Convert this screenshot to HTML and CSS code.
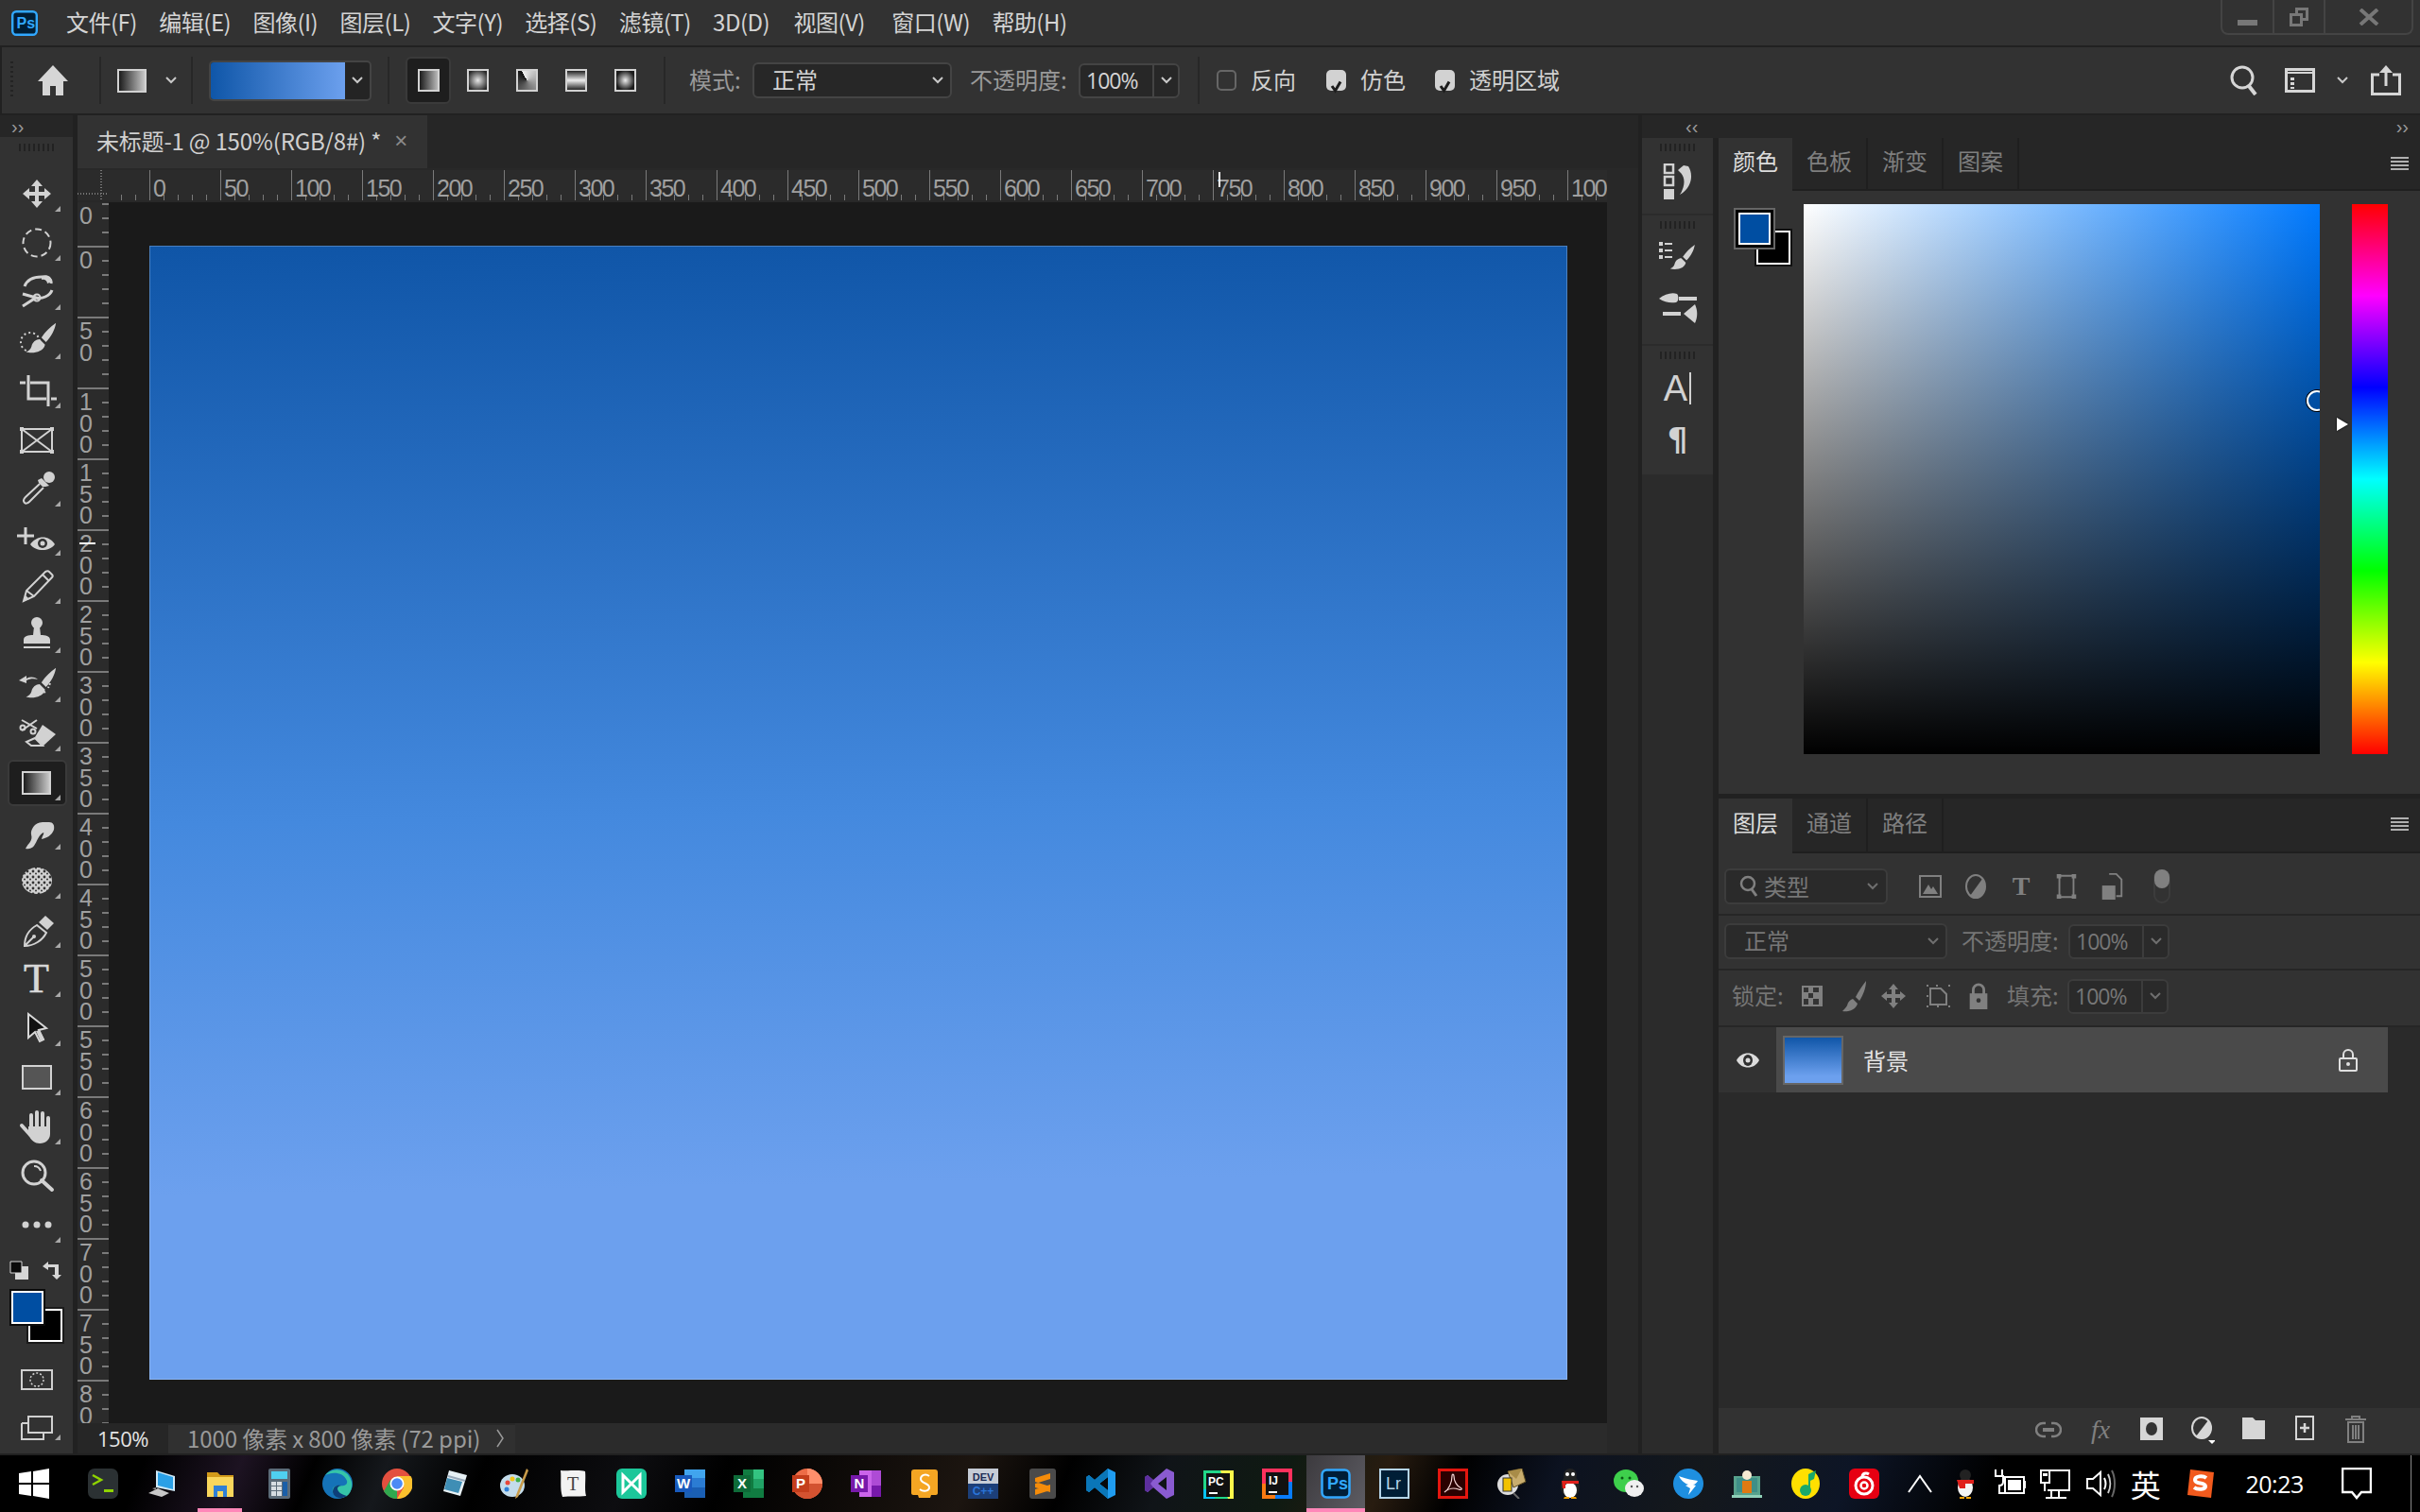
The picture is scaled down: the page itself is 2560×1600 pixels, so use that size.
FILE: index.html
```html
<!DOCTYPE html>
<html lang="zh">
<head>
<meta charset="utf-8">
<title>Photoshop</title>
<link rel="stylesheet" href="styles.css">
</head>
<body>
<svg class="defs" width="0" height="0">
  <symbol id="chev" viewBox="0 0 12 8"><path d="M1 1l5 5 5-5" fill="none" stroke="currentColor" stroke-width="2"/></symbol>
  <symbol id="brush" viewBox="0 0 48 48"><path d="M44 5C38 9 32 15 28 21l5 5C39 20 43 12 44 5zM26 23c-4 0-8 3-9 8-1 3-3 5-6 6 6 2 19 1 21-8z" fill="currentColor"/></symbol>
</svg>
<div class="app">
  <header class="menubar">
    <svg class="pslogo" viewBox="0 0 28 27"><rect x="1.2" y="1.2" width="25.6" height="24.6" rx="4" fill="#001e36" stroke="#31a8ff" stroke-width="2.4"/><text x="5.5" y="19" class="logo-t ps-t">Ps</text></svg>
    <nav class="menus">
      <span>文件(F)</span><span>编辑(E)</span><span>图像(I)</span><span>图层(L)</span><span>文字(Y)</span><span>选择(S)</span><span>滤镜(T)</span><span>3D(D)</span><span>视图(V)</span><span>窗口(W)</span><span>帮助(H)</span>
    </nav>
    <div class="winctl">
      <div class="wc wc-min"><i></i></div>
      <div class="wc wc-res"><svg viewBox="0 0 24 24" width="24" height="24"><path d="M8 2h14v14h-6v6H2V8h6zM11 5v3h5v5h3V5zM5 11v8h8v-8z" fill="#777"/></svg></div>
      <div class="wc wc-x"><svg viewBox="0 0 22 18" width="22" height="18"><path d="M2 1l18 16M20 1L2 17" stroke="#777" stroke-width="4"/></svg></div>
    </div>
  </header>

  <section class="options">
    <div class="grip-v"></div>
    <svg class="home" viewBox="0 0 32 32"><path d="M16 0L0 17h5v15h8V22h6v10h8V17h5z" fill="#d6d6d6"/></svg>
    <div class="osep"></div>
    <div class="opt-tool"><div class="grad-ic"></div><svg class="chev"><use href="#chev"/></svg></div>
    <div class="osep"></div>
    <div class="picker"><div class="picker-grad"></div><div class="picker-btn"><svg class="chev"><use href="#chev"/></svg></div></div>
    <div class="osep"></div>
    <div class="gtypes">
      <div class="gt on"><div class="gi gi-lin"></div></div>
      <div class="gt"><div class="gi gi-rad"></div></div>
      <div class="gt"><div class="gi gi-ang"></div></div>
      <div class="gt"><div class="gi gi-ref"></div></div>
      <div class="gt"><div class="gi gi-dia"></div></div>
    </div>
    <div class="osep"></div>
    <span class="lbl lbl-mode">模式:</span>
    <div class="sel sel-mode"><span>正常</span><svg class="chev"><use href="#chev"/></svg></div>
    <span class="lbl lbl-op">不透明度:</span>
    <div class="numbox"><span>100%</span><div class="numbtn"><svg class="chev"><use href="#chev"/></svg></div></div>
    <div class="osep osep-b"></div>
    <div class="cb"></div><span class="cbl">反向</span>
    <div class="cb ck"><svg viewBox="0 0 21 22" width="21" height="22"><path d="M6 11l3.500 5 5.500-9.500" fill="none" stroke="#1c1c1c" stroke-width="3"/></svg></div><span class="cbl">仿色</span>
    <div class="cb ck"><svg viewBox="0 0 21 22" width="21" height="22"><path d="M6 11l3.500 5 5.500-9.500" fill="none" stroke="#1c1c1c" stroke-width="3"/></svg></div><span class="cbl">透明区域</span>
    <div class="opt-right">
      <svg class="o-search" viewBox="0 0 30 32"><circle cx="13" cy="13" r="11" fill="none" stroke="#d6d6d6" stroke-width="3"/><path d="M20 22l7 9" stroke="#d6d6d6" stroke-width="4"/></svg>
      <svg class="o-work" viewBox="0 0 32 26"><path d="M1.500 1.500h29v23h-29z" fill="none" stroke="#d6d6d6" stroke-width="3"/><path d="M2 5h28" stroke="#d6d6d6" stroke-width="2"/><path d="M6 10h4v3H6zM6 15h4v3H6zM6 20h4v2H6z" fill="#d6d6d6"/></svg>
      <svg class="chev o-chev"><use href="#chev"/></svg>
      <svg class="o-share" viewBox="0 0 32 32"><path d="M9 10H1.500v20.500h29V10H23" fill="none" stroke="#d6d6d6" stroke-width="3"/><path d="M16 0l7 8h-5.500v14h-3V8H9z" fill="#d6d6d6"/></svg>
    </div>
  </section>

  <main class="main">
    <aside class="tools">
      <div class="collapse"><span class="dbl">››</span></div>
      <div class="grip"></div>
      <div class="toolcol">
        <div class="tool more"><svg viewBox="0 0 48 48"><path d="M24 9l6 7h-4v6h6v-4l7 6-7 6v-4h-6v6h4l-6 7-6-7h4v-6h-6v4l-7-6 7-6v4h6v-6h-4z"/></svg></div>
        <div class="tool more"><svg viewBox="0 0 48 48"><circle cx="24" cy="24" r="14.500" class="st" stroke-dasharray="7 4"/></svg></div>
        <div class="tool more"><svg viewBox="0 0 48 48"><path d="M11 18c3-8 10-10 18-10 7 0 11 3 10 7M9 39l14-9c6 2 15-2 17-8M9 26l14 4" class="st st3"/><circle cx="24" cy="30" r="3.500" class="st"/><path d="M29 7c6-2 11 1 11 6l-5 2c0-3-3-5-6-4z"/></svg></div>
        <div class="tool more"><svg viewBox="0 0 48 48"><circle cx="17" cy="25" r="10" class="st" stroke-dasharray="2 3"/><use href="#brush" x="2" y="0" width="46" height="46"/></svg></div>
        <div class="tool more"><svg viewBox="0 0 48 48"><path d="M6 16h6M15 8v25h19M17 16h19v25M39 33h6" class="st st3"/></svg></div>
        <div class="tool"><svg viewBox="0 0 48 48"><path d="M8 13h32v24H8zM8 13l32 24M40 13L8 37" class="st"/><path d="M6 11h4v4H6zM38 11h4v4h-4zM6 35h4v4H6zM38 35h4v4h-4z"/></svg></div>
        <div class="tool more"><svg viewBox="0 0 48 48"><path d="M29 13l8 8-4 1-3 0-4-4-1-3z"/><circle cx="37" cy="12" r="6"/><path d="M27 19L12 33c-3 3-2 5-1 6s3 1 5-1l15-15" class="st"/></svg></div>
        <div class="tool more"><svg viewBox="0 0 48 48"><path d="M12 13v18M3 22h18" class="st st3"/><path d="M17 31c7-10 20-10 26 0-6 8-20 8-26 0z"/><circle cx="30" cy="30" r="5" fill="#323232"/><circle cx="30" cy="30" r="2.500"/></svg></div>
        <div class="tool more"><svg viewBox="0 0 48 48"><path d="M10 40l3-11L33 9c2-1 3-1 4 0l3 3c1 1 1 2 0 3L21 35zM30 12l7 7M13 29l8 6" class="st"/><path d="M10 40l2-6 4 4z"/></svg></div>
        <div class="tool more"><svg viewBox="0 0 48 48"><circle cx="24" cy="11" r="6"/><path d="M21 15h6l1 9c5 0 10 1 10 5v4H10v-4c0-4 5-5 10-5z"/><path d="M10 37h28" class="st"/></svg></div>
        <div class="tool more"><svg viewBox="0 0 48 48"><use href="#brush" x="2" y="2" width="46" height="46"/><path d="M5 20l8-5v3c4-2 8-2 12 1-4-1-8-1-12 1v3z"/><path d="M38 23l-2 5M33 32l-2 1" class="st" stroke-dasharray="2 2"/></svg></div>
        <div class="tool more"><svg viewBox="0 0 48 48"><path d="M8 10l16 9M8 21l16-11" class="st"/><circle cx="9" cy="18" r="2.500" class="st"/><circle cx="20" cy="22" r="2.500" class="st"/><path d="M30 15l14 10-13 12-7-6-2-3z"/><path d="M22 29l8 8H18l-5-4z" class="st"/></svg></div>
        <div class="tool sel-tool more"><div class="grad-ic grad-tool"></div></div>
        <div class="tool more"><svg viewBox="0 0 48 48"><path d="M12 42c3-6 8-8 6-15-1-4 3-13 12-13h7c4 0 6 3 5 8-2 6-8 9-13 10 1-4 3-6 2-7-5 2-7 10-10 14-1 2-6 4-9 3z"/></svg></div>
        <div class="tool more"><svg viewBox="0 0 48 48"><defs><pattern id="spg" width="6" height="6" patternUnits="userSpaceOnUse"><rect width="6" height="6" fill="#d2d2d2"/><circle cx="2" cy="2" r="1.400" fill="#333"/><circle cx="5" cy="4.500" r="1" fill="#333"/></pattern></defs><ellipse cx="24" cy="24" rx="16" ry="14" fill="url(#spg)"/></svg></div>
        <div class="tool more"><svg viewBox="0 0 48 48"><path d="M11 41c0-9 4-17 13-22l10 8c-4 8-13 14-23 14zM11 41l10-10" class="st"/><circle cx="21" cy="31" r="2"/><path d="M26 16l7-7 9 8-7 7z" /></svg></div>
        <div class="tool more"><span class="t-tool">T</span></div>
        <div class="tool more"><svg viewBox="0 0 48 48"><path d="M15 9l19 15-8 2 5 10-4 2-5-10-7 6z" fill="#111" stroke="#d8d8d8" stroke-width="2"/><path d="M23 27l4-1 5 10-4 2z"/></svg></div>
        <div class="tool more"><svg viewBox="0 0 48 48"><rect x="9" y="12" width="30" height="24" fill="#555" stroke="#d2d2d2" stroke-width="2"/></svg></div>
        <div class="tool more"><svg viewBox="0 0 48 48"><path d="M18 12v16M24 9v18M30 10v18M36 15v15M8 23l9 10" class="st st4"/><path d="M15 24h23v8c0 6-5 10-11 10-5 0-9-3-12-9z"/></svg></div>
        <div class="tool"><svg viewBox="0 0 48 48"><circle cx="21" cy="21" r="12" class="st st3"/><path d="M29 29l11 10" class="st st4"/><path d="M21 14c4 0 6 2 7 5" class="st"/></svg></div>
        <div class="tool more"><svg viewBox="0 0 48 48"><circle cx="12" cy="24" r="3.500"/><circle cx="24" cy="24" r="3.500"/><circle cx="36" cy="24" r="3.500"/></svg></div>
      </div>
      <div class="colorctl">
        <div class="ctl-top">
          <svg class="def-c" viewBox="0 0 20 20"><path d="M6 6h14v14H6z" fill="#d6d6d6"/><path d="M1 1h12v12H1z" fill="#0a0a0a" stroke="#d6d6d6"/></svg>
          <svg class="swap-c" viewBox="0 0 20 20"><path d="M0 6l6-5v3h11v11h3l-5 5-5-5h3V7H6v3z" fill="#d6d6d6"/></svg>
        </div>
        <div class="swatches">
          <div class="sw sw-bg"></div>
          <div class="sw sw-fg"></div>
        </div>
      </div>
      <svg class="qmask" viewBox="0 0 34 22"><rect x="1" y="1" width="32" height="20" fill="none" stroke="#d0d0d0" stroke-width="2"/><circle cx="17" cy="11" r="7" fill="none" stroke="#d0d0d0" stroke-width="1.500" stroke-dasharray="2 2"/></svg>
      <div class="tool tool-last more"><svg viewBox="0 0 48 48"><path d="M15 14h25v17H15zM8 21h7M8 21v17h23v-7" fill="none" stroke="#d0d0d0" stroke-width="2"/></svg></div>
    </aside>

    <section class="doc">
      <div class="tabs">
        <div class="tab"><span>未标题-1 @ 150%(RGB/8#) *</span><b>×</b></div>
      </div>
      <div class="work">
        <div class="workmain">
          <div class="ruler-top">
            <div class="corner"></div>
            <div class="rt-scale">
              <span>0</span><span>50</span><span>100</span><span>150</span><span>200</span><span>250</span><span>300</span><span>350</span><span>400</span><span>450</span><span>500</span><span>550</span><span>600</span><span>650</span><span>700</span><span>750</span><span>800</span><span>850</span><span>900</span><span>950</span><span>1000</span>
            </div>
            <i class="guide-top"></i>
          </div>
          <div class="viewport">
            <div class="ruler-left">
              <span class="first">0</span><span>0</span><span>50</span><span>100</span><span>150</span><span>200</span><span>250</span><span>300</span><span>350</span><span>400</span><span>450</span><span>500</span><span>550</span><span>600</span><span>650</span><span>700</span><span>750</span><span>800</span>
              <i class="guide-left"></i>
            </div>
            <div class="paste"><div class="canvas"></div></div>
          </div>
          <div class="status">
            <div class="st-zoom">150%</div>
            <div class="st-info"><span>1000 像素 x 800 像素 (72 ppi)</span><svg viewBox="0 0 10 22" width="10" height="22"><path d="M2 2l6 9-6 9" fill="none" stroke="#999" stroke-width="1.500"/></svg></div>
            <div class="st-rest"></div>
          </div>
        </div>
        <div class="vscroll"></div>
      </div>
    </section>

    <section class="right">
      <div class="rhead"><span class="dbl dbl-l">‹‹</span><span class="dbl dbl-r">››</span></div>
      <div class="rbody">
        <div class="dock">
          <div class="dgroup dg1"><div class="grip dgrip"></div>
            <svg class="dic" viewBox="0 0 34 38"><path d="M3 1h9v9H3zM3 14h9v9H3z" fill="none" stroke="#d2d2d2" stroke-width="2.500"/><path d="M2 27h11v11H2z" fill="#d2d2d2"/><path d="M17 7l6-5 5 1c5 7 5 22-9 30 6-9 6-19 0-24z" fill="#d2d2d2"/></svg>
          </div>
          <div class="dgroup dg2"><div class="grip dgrip"></div>
            <svg class="dic dic1" viewBox="0 0 42 36"><path d="M1 1h4v4H1zM1 8h4v4H1zM1 15h4v4H1zM7 2h8v2H7zM7 9h8v2H7zM7 16h8v2H7z" fill="#d2d2d2"/><use href="#brush" class="dbr" x="4" y="0" width="38" height="38"/></svg>
            <svg class="dic dic2" viewBox="0 0 42 34"><path d="M1 8c6-5 14-7 19-5 2 2 2 8-1 9-6 1-12 0-18-4zM22 6h19v4H22zM5 22h19v4H5zM27 24l12-10c3 7 3 13 0 20z" fill="#d2d2d2"/></svg>
          </div>
          <div class="dgroup dg3"><div class="grip dgrip"></div>
            <div class="dtext dtext-a"><span>A</span><i></i></div>
            <div class="dtext dtext-p">¶</div>
          </div>
        </div>
        <div class="panels">
          <div class="panel p-color">
            <div class="ptabs"><span class="ptab on">颜色</span><span class="ptab">色板</span><span class="ptab">渐变</span><span class="ptab">图案</span><div class="pmenu"></div></div>
            <div class="cbody">
              <div class="cswatches"><div class="csw csw-bg"></div><div class="csw csw-fg"></div></div>
              <div class="picker-sq"><i class="pick-c"></i></div>
              <div class="hue-wrap"><i class="hue-mark"></i><div class="hue"></div></div>
            </div>
          </div>
          <div class="panel p-layers">
            <div class="ptabs ptabs-l"><span class="ptab on">图层</span><span class="ptab">通道</span><span class="ptab">路径</span><div class="pmenu"></div></div>
            <div class="lrow lrow-f">
              <div class="fsel"><svg viewBox="0 0 20 24" width="20" height="24"><circle cx="9" cy="9" r="7" fill="none" stroke="#808080" stroke-width="2.500"/><path d="M13 15l5 7" stroke="#808080" stroke-width="3"/></svg><span>类型</span><svg class="chev"><use href="#chev"/></svg></div>
              <div class="ficons">
                <svg viewBox="0 0 24 24"><path d="M1 1h22v22H1z" fill="none" stroke="#808080" stroke-width="2"/><path d="M4 20l6-10 3 5 2-3 5 8z" fill="#808080"/></svg>
                <svg viewBox="0 0 24 26"><ellipse cx="12" cy="13" rx="10" ry="12" fill="none" stroke="#808080" stroke-width="2"/><path d="M19 5A10 12 0 0 1 6 23z" fill="#808080"/></svg>
                <span class="t-small">T</span>
                <svg viewBox="0 0 24 30"><path d="M4 3h16v24H4z" fill="none" stroke="#808080" stroke-width="2"/><path d="M1 1h5v5H1zM18 1h5v5h-5zM1 24h5v5H1zM18 24h5v5h-5z" fill="#808080" /></svg>
                <svg viewBox="0 0 24 30"><path d="M9 1h8l6 6v19h-6" fill="none" stroke="#808080" stroke-width="2"/><path d="M1 14h15v16H1z" fill="#808080"/></svg>
              </div>
              <div class="ftoggle"><i></i></div>
            </div>
            <div class="lrow lrow-b">
              <div class="sel sel-blend dimf"><span>正常</span><svg class="chev"><use href="#chev"/></svg></div>
              <span class="lbl dim lbl-lop">不透明度:</span>
              <div class="numbox numbox-l"><span>100%</span><div class="numbtn"><svg class="chev"><use href="#chev"/></svg></div></div>
            </div>
            <div class="lrow lrow-k">
              <span class="lbl dim lbl-lock">锁定:</span>
              <div class="licons">
                <svg viewBox="0 0 22 22"><path d="M0 0h22v22H0z" fill="#808080"/><path d="M2 2h5v5H2zM12 2h6v5h-6zM7 8h5v5H7zM2 14h5v6H2zM12 14h6v6h-6z" fill="#333"/></svg>
                <svg viewBox="0 0 28 34" class="dimbr"><path d="M27 1c-4 5-8 11-11 17l4 4C24 16 27 8 27 1zM13 20c-3 1-5 3-6 7-1 2-3 4-5 6 6 1 14-1 16-8z" fill="#808080"/></svg>
                <svg viewBox="0 0 26 26"><path d="M13 0l5 6h-3v5h5V8l6 5-6 5v-3h-5v5h3l-5 6-5-6h3v-5H6v3l-6-5 6-5v3h5V6H8z" fill="#808080"/></svg>
                <svg viewBox="0 0 28 26"><path d="M6 5h11l6 6v11H6z" fill="none" stroke="#808080" stroke-width="2"/><path d="M2 1h2v2H2zM12 1h2v2h-2zM25 1h2v2h-2zM2 12h2v2H2zM2 23h2v2H2zM25 23h2v2h-2zM13 23h2v2h-2z" fill="#808080"/></svg>
                <svg viewBox="0 0 22 30"><path d="M5 13V8a6 6 0 0 1 12 0v5" fill="none" stroke="#808080" stroke-width="3"/><path d="M1 12h20v18H1z" fill="#808080"/><circle cx="11" cy="20" r="2.500" fill="#333"/></svg>
              </div>
              <span class="lbl dim lbl-fill">填充:</span>
              <div class="numbox numbox-l"><span>100%</span><div class="numbtn"><svg class="chev"><use href="#chev"/></svg></div></div>
            </div>
            <div class="llist">
              <div class="layer-line">
                <div class="eye"><svg viewBox="0 0 26 18" width="26" height="18"><path d="M1 9c5-10 19-10 24 0-5 10-19 10-24 0z" fill="#dcdcdc"/><ellipse cx="13" cy="9" rx="5" ry="6" fill="#2f2f2f"/><circle cx="13" cy="9" r="2.500" fill="#dcdcdc"/></svg></div>
                <div class="layer">
                  <div class="thumb"></div>
                  <span>背景</span>
                  <svg class="lay-lock" viewBox="0 0 20 24" width="20" height="24"><path d="M5 10V6a5 5 0 0 1 10 0v4" fill="none" stroke="#e0e0e0" stroke-width="2"/><rect x="1" y="10" width="18" height="13" rx="1" fill="none" stroke="#e0e0e0" stroke-width="2"/><circle cx="10" cy="16" r="2" fill="#e0e0e0"/></svg>
                </div>
              </div>
            </div>
            <div class="lfoot">
              <svg viewBox="0 0 28 20" width="28" height="20"><path d="M11 3H8a7 7 0 0 0 0 14h3M17 3h3a7 7 0 0 1 0 14h-3" fill="none" stroke="#808080" stroke-width="2.500"/><path d="M8 10h12" stroke="#808080" stroke-width="4"/></svg>
              <span class="fx">fx</span>
              <svg viewBox="0 0 26 32" width="26" height="32"><path d="M1 3h24v24H1z" fill="#d6d6d6"/><ellipse cx="13" cy="15" rx="6" ry="7" fill="#333"/></svg>
              <svg viewBox="0 0 26 32" width="26" height="32"><ellipse cx="12" cy="14" rx="10" ry="11" fill="none" stroke="#d6d6d6" stroke-width="2"/><path d="M19 6A10 11 0 0 1 6 23z" fill="#d6d6d6"/><path d="M19 27h8l-4 4z" fill="#fff"/></svg>
              <svg viewBox="0 0 26 32" width="26" height="32"><path d="M1 3h11l3 3h10v20H1z" fill="#d6d6d6"/></svg>
              <svg viewBox="0 0 26 32" width="26" height="32"><path d="M4 2h18v24H4z" fill="none" stroke="#d6d6d6" stroke-width="2"/><path d="M13 9v10M8 14h10" stroke="#d6d6d6" stroke-width="2.500"/></svg>
              <svg viewBox="0 0 26 32" width="26" height="32"><path d="M2 5h22M9 5V2h8v3M5 8h16v21H5zM10 11v15M13 11v15M16 11v15" fill="none" stroke="#808080" stroke-width="2"/></svg>
            </div>
          </div>
        </div>
      </div>
    </section>
  </main>

  <footer class="taskbar">
    <div class="tb-start"><svg viewBox="0 0 32 32" width="32" height="32"><path d="M0 5l13-2v12H0zM15 3l17-3v15H15zM0 17h13v12L0 27zM15 17h17v15l-17-3z" fill="#fff"/></svg></div>
    <div class="tb-i"><svg viewBox="0 0 32 32"><rect width="32" height="32" rx="7" fill="#2b3133"/><path d="M5 7l9 5-9 5" fill="none" stroke="#8fd400" stroke-width="2.500"/><path d="M17 22h10v3H17z" fill="#8fd400"/></svg></div>
    <div class="tb-i"><svg viewBox="0 0 32 32"><path d="M10 2l20 6v16L10 20z" fill="#cfe9f7"/><path d="M12 4l16 5v13l-16-4z" fill="#2aa0e6"/><path d="M2 26l10-5 12 5-8 4z" fill="#c8c8c8"/><path d="M6 21l4-1v3z" fill="#888"/></svg></div>
    <div class="tb-i tb-active-pink"><svg viewBox="0 0 32 32"><path d="M2 4h11l3 3h14v4H2z" fill="#d29a1a"/><path d="M2 9h28v21H2z" fill="#f9d65c"/><path d="M9 18h14v12h-4v-6h-6v6H9z" fill="#2f7fd6"/></svg></div>
    <div class="tb-i"><svg viewBox="0 0 32 32"><rect x="5" width="23" height="32" rx="2" fill="#5b6b78"/><rect x="8" y="3" width="17" height="8" fill="#4fd0f0"/><path d="M8 14h5v4H8zM14 14h5v4h-5zM8 19h5v4H8zM14 19h5v4h-5zM8 24h5v5H8zM14 24h5v5h-5z" fill="#d6dde2"/><path d="M20 14h5v15h-5z" fill="#1a5fa8"/></svg></div>
    <div class="tb-i"><svg viewBox="0 0 32 32"><circle cx="16" cy="16" r="16" fill="#1573b8"/><path d="M31 20A16 16 0 0 0 3 7C8 4 22 2 26 13c1 4-3 6-8 5-5 0-8 2-7 7 1 5 8 8 15 4 3-2 4-5 5-9z" fill="#35c5a8"/><path d="M11 25c0-6 4-8 9-7-4 1-5 3-3 6 2 3 6 4 9 5-6 4-14 2-15-4z" fill="#0d3f7a"/></svg></div>
    <div class="tb-i"><svg viewBox="0 0 32 32"><circle cx="16" cy="16" r="16" fill="#e3503f"/><path d="M16 32A16 16 0 0 1 2 24l7-12 7 4z" fill="#30a84f"/><path d="M16 8h14.500A16 16 0 0 1 16 32l7-12z" fill="#fbc02d"/><circle cx="16" cy="16" r="7.500" fill="#fff"/><circle cx="16" cy="16" r="5.800" fill="#4b8bf5"/></svg></div>
    <div class="tb-i"><svg viewBox="0 0 32 32"><path d="M9 2l19 5-7 22L3 24z" fill="#e7f1f5"/><path d="M7 10l16 4-4 12L4 22z" fill="#3f8eb5"/><path d="M8 8l18 5" stroke="#9ab" stroke-width="2"/></svg></div>
    <div class="tb-i"><svg viewBox="0 0 32 32"><ellipse cx="14" cy="18" rx="13" ry="12" fill="#c4dceb"/><circle cx="9" cy="15" r="2.500" fill="#e8483a"/><circle cx="14" cy="11" r="2.500" fill="#f5c518"/><circle cx="20" cy="12" r="2.500" fill="#3fae49"/><circle cx="8" cy="22" r="2.500" fill="#2f7fd6"/><path d="M29 0l2 2-11 28-3 2 1-4z" fill="#c89b4a"/></svg></div>
    <div class="tb-i"><svg viewBox="0 0 32 32"><path d="M3 2c6 1 20-1 26 1 1 8-1 18 1 26-8 1-18 0-25 1C2 22 4 10 3 2z" fill="#f2f2f2"/><text x="16" y="23" class="logo-t t-gray">T</text></svg></div>
    <div class="tb-i"><svg viewBox="0 0 32 32"><rect width="32" height="32" rx="6" fill="#1cc79a"/><path d="M7 7l18 18V7L7 25z" fill="none" stroke="#fff" stroke-width="3"/></svg></div>
    <div class="tb-i"><svg viewBox="0 0 32 32"><path d="M10 1h22v30H10z" fill="#1a5fb4"/><path d="M10 1h22v9H10z" fill="#41a5ee"/><path d="M10 10h22v10H10z" fill="#2b7cd3"/><rect y="7" width="18" height="18" fill="#185abd"/><text x="9" y="21" class="logo-t t-center">W</text></svg></div>
    <div class="tb-i"><svg viewBox="0 0 32 32"><path d="M10 1h22v30H10z" fill="#107c41"/><path d="M21 1h11v10H21z" fill="#33c481"/><path d="M21 11h11v10H21z" fill="#21a366"/><rect y="7" width="18" height="18" fill="#0e6b38"/><text x="9" y="21" class="logo-t t-center">X</text></svg></div>
    <div class="tb-i"><svg viewBox="0 0 32 32"><circle cx="16" cy="16" r="16" fill="#ed6c47"/><path d="M16 0a16 16 0 0 1 16 16H16z" fill="#ff8f6b"/><path d="M0 16h32a16 16 0 0 1-32 0z" fill="#d35230"/><rect y="7" width="18" height="18" fill="#c43e1c"/><text x="9" y="21" class="logo-t t-center">P</text></svg></div>
    <div class="tb-i"><svg viewBox="0 0 32 32"><path d="M9 2h23v28H9z" fill="#ca64ea"/><path d="M22 2h10v28H22z" fill="#ae4bd5"/><path d="M22 18h10v12H22z" fill="#7719aa"/><rect y="7" width="18" height="18" fill="#7719aa"/><text x="9" y="21" class="logo-t t-center">N</text></svg></div>
    <div class="tb-i"><svg viewBox="0 0 32 32"><path d="M5 1h22c2 0 3 1 3 3v22c0 1-1 2-2 2h-5l-1 3H10l-1-3H4c-1 0-2-1-2-2V4c0-2 1-3 3-3z" fill="#f5a623"/><path d="M21 8c-4-3-9-1-9 3 0 5 9 4 9 9 0 4-6 5-10 2" fill="none" stroke="#fff" stroke-width="2"/></svg></div>
    <div class="tb-i"><svg viewBox="0 0 32 32"><rect width="32" height="32" fill="#1c3f79"/><rect y="0" width="32" height="16" fill="#c6ccd6"/><text x="16" y="13" class="logo-t dev-t">DEV</text><text x="16" y="28" class="logo-t cpp-t">C++</text></svg></div>
    <div class="tb-i"><svg viewBox="0 0 32 32"><rect x="2" width="28" height="32" rx="3" fill="#4a4a4a"/><path d="M24 5L8 10v6l16-5zM8 14l16 5v6L8 20zM24 17v6L8 28v-6z" fill="#f58c0a"/></svg></div>
    <div class="tb-i"><svg viewBox="0 0 32 32"><path d="M23 0l8 4v24l-8 4-14-12-6 5-3-2V9l3-2 6 5zM23 9l-9 7 9 7z" fill="#1f9cf0"/><path d="M23 0v9l-9 7 9 7v9L9 20l-6 5-3-2V9l3-2 6 5z" fill="#0a76b8"/></svg></div>
    <div class="tb-i"><svg viewBox="0 0 32 32"><path d="M23 0l8 4v24l-8 4-14-12-6 5-3-2V9l3-2 6 5zM23 9l-9 7 9 7z" fill="#8a5bd1"/><path d="M3 7l6 5-3 4 3 4-6 5-3-2V9z" fill="#5d2f9e"/></svg></div>
    <div class="tb-i"><svg viewBox="0 0 32 32"><path d="M0 2h32v30H0z" fill="#21d789"/><path d="M18 2h14v30h-6z" fill="#fcf84a"/><path d="M0 22h12v10H0z" fill="#07c3f2"/><rect x="3" y="5" width="25" height="25" fill="#111"/><text x="5" y="18" class="logo-t tile-t">PC</text><path d="M6 25h9v2H6z" fill="#fff"/></svg></div>
    <div class="tb-i"><svg viewBox="0 0 32 32"><path d="M0 0h32v32H0z" fill="#fe315d"/><path d="M14 14h18v18H14z" fill="#087cfa"/><path d="M0 16h14v16H0z" fill="#f97a12"/><rect x="4" y="4" width="24" height="24" fill="#111"/><text x="7" y="17" class="logo-t tile-t">IJ</text><path d="M7 24h9v2H7z" fill="#fff"/></svg></div>
    <div class="tb-i tb-active"><svg viewBox="0 0 32 32"><rect x="1.500" y="1.500" width="29" height="29" rx="5" fill="#001e36" stroke="#31a8ff" stroke-width="2.500"/><text x="7" y="22" class="logo-t tbps-t">Ps</text></svg></div>
    <div class="tb-i"><svg viewBox="0 0 32 32"><rect x="1" y="1" width="30" height="30" fill="#001e36" stroke="#b4d4e8" stroke-width="2"/><text x="7" y="22" class="logo-t tblr-t">Lr</text></svg></div>
    <div class="tb-i"><svg viewBox="0 0 32 32"><rect x="1.500" y="1.500" width="29" height="29" fill="#2a0000" stroke="#e4160f" stroke-width="3"/><path d="M7 25c5-3 8-11 8-17 0-3 2-2 2 0 0 5 3 11 8 13 1 1-1 2-3 1-5-2-11-1-15 3z" fill="none" stroke="#f5d5d5" stroke-width="1.200"/></svg></div>
    <div class="tb-i"><svg viewBox="0 0 32 32"><circle cx="12" cy="17" r="11" fill="#ddd"/><path d="M12 3l15-3 4 14-13 6z" fill="#c8ad6e" stroke="#5a4a20"/><path d="M12 3l9 8 6-11z" fill="#a88c48"/><rect x="7" y="10" width="9" height="14" fill="#f2c200" stroke="#333"/><path d="M18 26l6 6" stroke="#666" stroke-width="2"/></svg></div>
    <div class="tb-i"><svg viewBox="0 0 32 32"><ellipse cx="16" cy="19" rx="10" ry="12" fill="#222"/><ellipse cx="16" cy="23" rx="7" ry="8" fill="#fff"/><circle cx="16" cy="7" r="7" fill="#222"/><circle cx="13" cy="6" r="2" fill="#fff"/><circle cx="19" cy="6" r="2" fill="#fff"/><path d="M7 13h18v3H11v5H8z" fill="#e0201b"/><path d="M10 30h5v2H9zM17 30h5l1 2h-6z" fill="#f0a000"/></svg></div>
    <div class="tb-i"><svg viewBox="0 0 32 32"><ellipse cx="13" cy="13" rx="13" ry="12" fill="#3ecf4c"/><ellipse cx="22" cy="21" rx="10" ry="9" fill="#f0f0f0"/><circle cx="9" cy="10" r="1.500" fill="#0a5c14"/><circle cx="17" cy="10" r="1.500" fill="#0a5c14"/><circle cx="19" cy="19" r="1.200" fill="#555"/><circle cx="25" cy="19" r="1.200" fill="#555"/></svg></div>
    <div class="tb-i"><svg viewBox="0 0 32 32"><ellipse cx="16" cy="16" rx="16" ry="16" fill="#1e8fe0"/><path d="M6 8c7 3 14 4 20 5-1 2-3 4-5 4l3 1-8 10 2-7-5-3 3-1C11 15 8 12 6 8z" fill="#fff"/></svg></div>
    <div class="tb-i"><svg viewBox="0 0 32 32"><rect x="2" y="8" width="28" height="20" fill="#57a28c"/><rect x="5" y="10" width="22" height="15" fill="#3f8f87"/><circle cx="16" cy="7" r="5" fill="#f7ead2"/><path d="M11 13h10v13H11z" fill="#e07a12"/><rect y="28" width="32" height="3" fill="#8fd0b8"/></svg></div>
    <div class="tb-i"><svg viewBox="0 0 32 32"><ellipse cx="16" cy="16" rx="15" ry="16" fill="#ffe000"/><circle cx="16" cy="23" r="6" fill="#1aa86a"/><path d="M19 23V6l8-4-2 9-4 2v10z" fill="#1aa86a"/></svg></div>
    <div class="tb-i"><svg viewBox="0 0 32 32"><rect width="32" height="32" rx="6" fill="#e60012"/><circle cx="16" cy="18" r="9" fill="none" stroke="#fff" stroke-width="3"/><circle cx="16" cy="18" r="3.500" fill="none" stroke="#fff" stroke-width="2.500"/><path d="M14 9c0-4 4-5 7-3" fill="none" stroke="#fff" stroke-width="3"/></svg></div>
    <div class="tray">
      <div class="ty"><svg viewBox="0 0 26 20" width="26" height="20"><path d="M1 19L13 2l12 17" fill="none" stroke="#fff" stroke-width="2"/></svg></div>
      <div class="ty"><svg viewBox="0 0 24 32" width="24" height="32"><ellipse cx="12" cy="20" rx="8" ry="10" fill="#f5f5f5"/><circle cx="12" cy="7" r="6" fill="#222"/><path d="M3 12h18v4h-9v5H6z" fill="#e0201b"/><path d="M6 30h5v2H6zM13 30h5v2h-5z" fill="#f0a000"/></svg></div>
      <div class="ty"><svg viewBox="0 0 34 32" width="34" height="32"><path d="M2 1v7M9 1v7M1 8h9v6c0 3-2 4-4 4v8h9" fill="none" stroke="#fff" stroke-width="2"/><path d="M12 9h20v17H12z" fill="none" stroke="#fff" stroke-width="2"/><path d="M15 12h14v11H15z" fill="#fff"/><path d="M32 13h2v8h-2z" fill="#fff"/></svg></div>
      <div class="ty"><svg viewBox="0 0 32 34" width="32" height="34"><path d="M8 3h23v21H8M12 24v7M20 24v7M6 32h22" fill="none" stroke="#fff" stroke-width="2"/><path d="M1 3h9v13H1zM5 16v9" fill="none" stroke="#fff" stroke-width="2"/><rect x="3" y="6" width="5" height="3" fill="#fff"/></svg></div>
      <div class="ty"><svg viewBox="0 0 32 32" width="32" height="32"><path d="M2 11h6l8-7v24l-8-7H2z" fill="none" stroke="#fff" stroke-width="2"/><path d="M20 10c2 4 2 8 0 12" fill="none" stroke="#fff" stroke-width="2"/><path d="M24 6c3 6 3 14 0 20" fill="none" stroke="#ccc" stroke-width="2"/><path d="M28 2c4 8 4 20 0 28" fill="none" stroke="#666" stroke-width="2"/></svg></div>
      <div class="ty ty-ime">英</div>
      <div class="ty ty-sogou"><svg viewBox="0 0 32 32" width="32" height="32"><path d="M6 1l25 3-3 27-25-3z" fill="#f25a1d"/><path d="M23 10c-4-3-12-2-12 2 0 5 11 2 11 7 0 3-8 4-12 1" fill="none" stroke="#fff" stroke-width="4"/></svg></div>
    </div>
    <div class="clock">20:23</div>
    <div class="notif"><svg viewBox="0 0 32 34" width="32" height="34"><path d="M1 1h30v25H21l-5 6-5-6H1z" fill="none" stroke="#fff" stroke-width="2.500"/></svg></div>
  </footer>
</div>
</body>
</html>
```
FILE: styles.css
```css
* { box-sizing: border-box; }
html, body { margin: 0; padding: 0; background: #000; }
body { width: 2560px; height: 1600px; overflow: hidden; font-family: "Noto Sans CJK SC", "Liberation Sans", sans-serif; font-size: 24px; color: #d4d4d4; }
.defs { position: absolute; }
.app { width: 2560px; height: 1600px; display: flex; flex-direction: column; background: #212121; }

/* menu */
.menubar { height: 48px; margin-bottom: 2px; background: #323232; display: flex; align-items: center; flex: none; position: relative; }
.pslogo { width: 28px; height: 27px; margin-left: 12px; flex: none; }
.logo-t { font-family: "Liberation Sans", sans-serif; font-weight: 700; fill: #fff; }
.ps-t { font-size: 16px; fill: #31a8ff; }
.menus { display: flex; margin-left: 30px; gap: 23.300px; line-height: 1; padding-bottom: 3px; }
.menus span { white-space: nowrap; letter-spacing: -.5px; }
.menus span:nth-child(8) { margin-right: 2px; }
.menus span:nth-child(9) { margin-right: 5px; }
.winctl { position: absolute; right: 7px; top: 0; width: 204px; height: 37px; border: 2px solid #444; border-top: 0; border-radius: 0 0 8px 8px; display: flex; }
.wc { display: flex; align-items: center; justify-content: center; border-right: 2px solid #444; }
.wc-min { width: 55px; align-items: flex-end; padding-bottom: 8px; }
.wc-min i { width: 21px; height: 6px; background: #777; }
.wc-res { width: 54px; }
.wc-x { flex: 1; border: 0; }

/* options */
.options { height: 70px; margin-bottom: 2px; margin-left: 2px; background: #323232; display: flex; align-items: center; flex: none; position: relative; }
.grip-v { width: 3px; height: 40px; margin-left: 9px; background: repeating-linear-gradient(to bottom, #232323 0 2px, transparent 2px 5px); }
.home { width: 32px; height: 32px; margin-left: 26px; }
.osep { width: 2px; height: 50px; background: #272727; }
.home + .osep { margin-left: 33px; }
.opt-tool { display: flex; align-items: center; width: 95px; padding-left: 17px; color: #c8c8c8; }
.opt-tool .chev { margin-left: 20px; }
.opt-tool + .osep { margin-right: 17px; }
.grad-ic { width: 31px; height: 25px; border: 2px solid #d2d2d2; background: linear-gradient(to right, #1c1c1c, #c8c8c8); }
.chev { width: 12px; height: 8px; flex: none; color: #c8c8c8; }
.picker { width: 172px; height: 43px; display: flex; border: 2px solid #444; border-radius: 5px; background: #242424; overflow: hidden; }
.picker-grad { width: 142px; background: linear-gradient(to right, #0f56a8, #6ca0ee); }
.picker-btn { flex: 1; display: flex; align-items: center; justify-content: center; }
.picker + .osep { margin-left: 17px; margin-right: 17px; }
.gtypes { display: flex; align-items: center; margin-right: 15px; }
.gt { width: 52px; height: 50px; display: flex; align-items: center; justify-content: center; border: 2px solid transparent; }
.gt.on { width: 48px; margin-right: 2px; background: #1e1e1e; border-color: #3a3a3a; border-radius: 6px; }
.gi { width: 23px; height: 24px; border: 2px solid #d2d2d2; }
.gi-lin { background: linear-gradient(to right, #1c1c1c, #b8b8b8); }
.gi-rad { background: radial-gradient(circle, #e8e8e8, #2a2a2a 85%); }
.gi-ang { background: conic-gradient(from 330deg, #f0f0f0, #111); }
.gi-ref { background: linear-gradient(to bottom, #222, #eee, #222); }
.gi-dia { background: radial-gradient(ellipse at center, #eee, #1c1c1c 75%); }
.lbl { color: #9a9a9a; white-space: nowrap; line-height: 1; padding-bottom: 3px; }
.lbl-mode { margin-left: 25px; width: 67px; }
.sel { height: 38px; border: 2px solid #444; border-radius: 6px; background: #272727; display: flex; align-items: center; justify-content: space-between; padding: 0 7px 0 19px; color: #d4d4d4; }
.sel span { line-height: 1; padding-bottom: 2px; }
.sel-mode { width: 211px; }
.lbl-op { margin-left: 19px; width: 115px; }
.numbox { width: 107px; height: 37px; border: 2px solid #444; border-radius: 6px; background: #272727; display: flex; align-items: center; font-family: "Open Sans", "Liberation Sans", sans-serif; }
.numbox > span { width: 76px; padding-left: 6px; letter-spacing: -1px; font-size: 23px; line-height: 1; }
.numbtn { flex: 1; height: 100%; border-left: 2px solid #444; display: flex; align-items: center; justify-content: center; }
.osep-b { margin-left: 19px; margin-right: 18px; }
.cb { width: 21px; height: 22px; flex: none; border: 2px solid #666; border-radius: 5px; }
.cb.ck { background: #d2d2d2; border: 0; }
.cbl { margin-left: 15px; margin-right: 32px; line-height: 1; color: #d0d0d0; white-space: nowrap; padding-bottom: 2px; }
.cbl:nth-last-of-type(2) { margin-right: 31px; }
.opt-right { margin-left: auto; display: flex; align-items: center; margin-right: 20px; }
.o-search { width: 30px; height: 32px; margin-right: 28px; }
.o-work { width: 32px; height: 26px; }
.o-chev { margin-left: 23px; margin-right: 24px; }
.o-share { width: 32px; height: 32px; }

/* main */
.main { flex: 1; min-height: 0; display: flex; }
.tools { width: 77px; margin-right: 5px; background: #323232; display: flex; flex-direction: column; flex: none; }
.collapse { height: 23px; background: #262626; margin-bottom: 1px; display: flex; align-items: center; padding-left: 12px; }
.dbl { color: #9a9a9a; font-family: "Liberation Sans", sans-serif; font-size: 20px; line-height: 1; display: block; }
.grip { width: 38px; height: 8px; margin: 6px 0 0 20px; flex: none; background: repeating-linear-gradient(to right, #222 0 2px, transparent 2px 5px); }
.toolcol { margin-top: 19px; display: flex; flex-direction: column; }
.tool { height: 51.95px; width: 77px; display: flex; align-items: center; justify-content: center; position: relative; flex: none; }
.tool svg { width: 48px; height: 48px; fill: #d2d2d2; color: #d2d2d2; }
.st { fill: none; stroke: #d2d2d2; stroke-width: 2; }
.st3 { stroke-width: 3; }
.st4 { stroke-width: 4; stroke-linecap: round; }
.tool.more::after { content: ""; position: absolute; right: 13px; bottom: 7px; width: 0; height: 0; border-left: 6px solid transparent; border-bottom: 6px solid #a8a8a8; }
.sel-tool::before { content: ""; position: absolute; left: 8px; right: 6px; top: 2px; bottom: 1px; background: #1e1e1e; border: 2px solid #3a3a3a; border-radius: 6px; }
.grad-tool { position: relative; }
.t-tool { font-family: "Liberation Serif", serif; font-weight: 400; font-size: 44px; line-height: 1; color: #d8d8d8; -webkit-text-stroke: .6px #d8d8d8; }
.colorctl { margin-top: 12px; margin-left: 10px; }
.ctl-top { display: flex; justify-content: flex-start; height: 22px; }
.def-c { width: 20px; height: 20px; }
.swap-c { width: 20px; height: 20px; margin-left: 15px; }
.swatches { position: relative; height: 60px; margin-top: 8px; }
.sw { position: absolute; }
.sw-fg { left: 0; top: 0; width: 38px; height: 39px; background: #004ea2; box-shadow: inset 0 0 0 2px #fff; border: 2px solid #0a0a0a; }
.sw-bg { left: 18px; top: 19px; width: 40px; height: 39px; background: #000; box-shadow: inset 0 0 0 2px #fff; border: 2px solid #1a1a1a; }
.qmask { width: 34px; height: 26px; margin: 23px 0 0 22px; flex: none; }
.tool-last { margin-top: 14px; height: 44px; }

/* doc */
.doc { width: 1651px; display: flex; flex-direction: column; flex: none; background: #282828; }
.tabs { height: 56px; margin-bottom: 2px; display: flex; background: #262626; flex: none; }
.tab { width: 370px; background: #323232; display: flex; align-items: center; padding-left: 20px; padding-bottom: 2px; white-space: nowrap; color: #d0d0d0; }
.tab span { letter-spacing: -.2px; line-height: 1; }
.tab b { font-weight: 400; margin-left: 14px; color: #8a8a8a; font-family: "Liberation Sans", sans-serif; }
.work { flex: 1; min-height: 0; display: flex; }
.workmain { width: 1618px; display: flex; flex-direction: column; }
.vscroll { flex: 1; background: #282828; }
.ruler-top { height: 32px; margin-bottom: 2px; display: flex; position: relative; flex: none; background: #2b2b2b; overflow: hidden; }
.corner { width: 33px; flex: none; background:
  repeating-linear-gradient(to right, #777 0 1px, transparent 1px 3px) 0 24px / 100% 2px no-repeat,
  repeating-linear-gradient(to bottom, #777 0 1px, transparent 1px 3px) 24px 0 / 2px 100% no-repeat; }
.rt-scale { flex: 1; display: flex; padding-left: 43px; overflow: hidden; font-family: "Liberation Sans", sans-serif; font-size: 25px; color: #a0a0a0; letter-spacing: -1.5px;
  background:
    linear-gradient(to right, #7a7a7a 1px, transparent 1px) 43px 0 / 75px 100% repeat-x,
    linear-gradient(to right, #7a7a7a 1px, transparent 1px) 13px 100% / 15px 6px repeat-x; }
.rt-scale span { width: 75px; flex: none; padding-left: 4px; line-height: 38px; height: 32px; }
.guide-top { position: absolute; left: 1207px; top: 2px; width: 2px; height: 16px; background: #fff; }
.viewport { height: 1292px; display: flex; flex: none; }
.ruler-left { width: 33px; flex: none; position: relative; overflow: hidden; background-color: #2b2b2b; font-family: "Liberation Sans", sans-serif; font-size: 25px; color: #a0a0a0;
  background-image:
    linear-gradient(to bottom, #7a7a7a 2px, transparent 2px),
    linear-gradient(to bottom, #7a7a7a 2px, transparent 2px);
  background-size: 32px 75px, 7px 15px;
  background-position: 0 46px, 100% 1px;
  background-repeat: repeat-y, repeat-y; }
.ruler-left span { display: block; height: 75px; width: 16px; padding: 4px 0 0 2px; word-break: break-all; line-height: 22.500px; }
.ruler-left span.first { height: 46px; padding-top: 3px; }
.guide-left { position: absolute; left: 2px; top: 360px; width: 17px; height: 2px; background: #fff; }
.paste { flex: 1; background: #1a1a1a; padding: 46px 0 0 43px; overflow: hidden; }
.canvas { width: 1500px; height: 1200px; background: linear-gradient(179deg, #0f55a7 0%, #4489de 50%, #6ca0ee 82%); box-shadow: inset 0 0 0 1px rgba(210,225,245,.3); }
.status { flex: 1; display: flex; }
.st-zoom { width: 96px; background: #262626; padding-left: 21px; line-height: 32px; color: #e4e4e4; font-family: "Open Sans", sans-serif; font-size: 22px; letter-spacing: -.5px; }
.st-info { width: 367px; margin-top: 2px; background: #303030; padding-left: 20px; padding-bottom: 2px; display: flex; align-items: center; color: #9a9a9a; justify-content: flex-start; white-space: nowrap; }
.st-info span { width: 326px; line-height: 1; letter-spacing: -.1px; }
.st-rest { flex: 1; background: #2b2b2b; }

/* right */
.right { margin-left: 4px; flex: 1; min-width: 0; display: flex; flex-direction: column; }
.rhead { height: 24px; background: #262626; display: flex; align-items: center; position: relative; flex: none; }
.dbl-l { margin-left: 46px; }
.dbl-r { margin-left: auto; margin-right: 12px; }
.rbody { flex: 1; display: flex; min-height: 0; }
.dock { width: 75px; margin-right: 6px; background: #2b2b2b; flex: none; display: flex; flex-direction: column; gap: 2px; }
.dgroup { background: #323232; display: flex; flex-direction: column; align-items: center; flex: none; }
.dg1 { height: 80px; }
.dg2, .dg3 { height: 136px; }
.dgrip { margin: 6px auto 0; }
.dic { width: 34px; height: 38px; margin-top: 13px; }
.dg2 .dic1 { width: 42px; height: 36px; margin-top: 13px; color: #d2d2d2; }
.dg2 .dic2 { width: 42px; height: 34px; margin-top: 17px; }
.dtext { color: #d2d2d2; font-family: "Liberation Sans", sans-serif; line-height: 1; display: flex; align-items: center; }
.dtext-a { font-size: 38px; margin-top: 14px; height: 34px; }
.dtext-a i { width: 2px; height: 34px; background: #d2d2d2; margin-left: 2px; }
.dtext-p { font-family: "DejaVu Sans", sans-serif; font-size: 34px; margin-top: 20px; font-weight: 700; }
.panels { flex: 1; min-width: 0; display: flex; flex-direction: column; }
.panel { background: #323232; }
.p-color { height: 694px; margin-bottom: 5px; flex: none; }
.p-layers { flex: 1; display: flex; flex-direction: column; min-height: 0; }
.ptabs { height: 56px; display: flex; background: #262626; border-bottom: 2px solid #1f1f1f; position: relative; flex: none; }
.ptab { width: 80px; height: 54px; line-height: 48px; text-align: center; color: #7f7f7f; border-right: 2px solid #1f1f1f; }
.ptab.on { width: 78px; height: 56px; background: #323232; color: #dcdcdc; border-right: 0; }
.pmenu { position: absolute; right: 12px; top: 20px; width: 19px; height: 16px; background: repeating-linear-gradient(to bottom, #b0b0b0 0 2px, transparent 2px 4px); }
.ptabs-l { height: 58px; }
.ptabs-l .ptab { height: 56px; line-height: 50px; }
.ptabs-l .ptab.on { height: 58px; }
.cbody { display: flex; position: relative; padding: 14px 0 0 90px; }
.cswatches { position: absolute; left: 16px; top: 18px; width: 64px; height: 64px; }
.csw { position: absolute; }
.csw-fg { left: 0; top: 0; width: 44px; height: 44px; background: #004ea2; border: 2px solid #666; box-shadow: inset 0 0 0 3px #000, inset 0 0 0 5px #fff; }
.csw-bg { left: 22px; top: 22px; width: 40px; height: 40px; background: #000; box-shadow: inset 0 0 0 2px #111, inset 0 0 0 4px #fff; }
.picker-sq { width: 546px; height: 582px; position: relative; overflow: hidden; background: linear-gradient(to top, #000, rgba(0,0,0,0)), linear-gradient(to right, #fff, #007aff); }
.pick-c { position: absolute; left: 532px; top: 197px; width: 22px; height: 22px; border: 2px solid #fff; border-radius: 50%; box-shadow: 0 0 0 1px #000; }
.hue-wrap { display: flex; margin-left: 20px; position: relative; padding-left: 14px; }
.hue { width: 38px; height: 582px; background: linear-gradient(to bottom, #f00, #f0f 16.67%, #00f 33.33%, #0ff 50%, #0f0 66.67%, #ff0 83.33%, #f00); }
.hue-mark { position: absolute; left: -2px; top: 226px; width: 0; height: 0; border-left: 12px solid #fff; border-top: 7px solid transparent; border-bottom: 7px solid transparent; filter: drop-shadow(0 0 1px #000); }

.lrow { display: flex; align-items: center; flex: none; padding-left: 8px; border-bottom: 2px solid #262626; }
.lrow-f { height: 66px; padding-top: 6px; padding-left: 6px; }
.lrow-b { height: 58px; padding-bottom: 2px; padding-left: 6px; }
.lrow-k { height: 60px; padding-bottom: 4px; padding-left: 14px; }
.fsel { width: 173px; height: 38px; border: 2px solid #3c3c3c; border-radius: 6px; background: #2a2a2a; display: flex; align-items: center; padding: 0 8px 0 14px; color: #777; }
.fsel span { margin-left: 6px; margin-right: auto; line-height: 1; }
.fsel .chev, .dimf .chev, .numbox-l .chev { color: #6f6f6f; }
.ficons { display: flex; align-items: center; margin-left: 33px; }
.ficons > * { width: 24px; height: 28px; margin-right: 24px; }
.t-small { font-family: "Liberation Serif", serif; font-weight: 700; font-size: 28px; line-height: 28px; color: #808080; text-align: center; }
.ftoggle { width: 18px; height: 36px; margin-left: 8px; border: 2px solid #3c3c3c; border-radius: 9px; position: relative; }
.ftoggle i { position: absolute; left: -1px; top: -2px; width: 16px; height: 20px; border-radius: 8px; background: #808080; }
.sel-blend { width: 236px; height: 38px; color: #777; border-color: #3c3c3c; background: #2a2a2a; }
.lbl.dim { color: #757575; }
.lbl-lop { margin-left: 15px; width: 113px; }
.numbox-l { border-color: #3c3c3c; background: #2a2a2a; color: #777; }
.numbox-l .numbtn { border-color: #3c3c3c; }
.lbl-lock { width: 74px; }
.licons { display: flex; align-items: center; width: 217px; }
.licons svg { width: 22px; height: 28px; margin-right: 22.500px; flex: none; }
.licons svg:nth-child(1) { margin-right: 19px; }
.licons svg:nth-child(2) { width: 28px; height: 34px; margin-right: 15px; }
.licons svg:nth-child(3) { width: 26px; margin-right: 20px; }
.licons svg:nth-child(4) { width: 28px; margin-right: 18px; }
.lbl-fill { margin-left: 0; width: 64px; }
.llist { flex: 1; background: #2a2a2a; min-height: 0; }
.layer-line { height: 69px; display: flex; }
.eye { width: 61px; background: #323232; display: flex; align-items: center; justify-content: center; }
.layer { width: 647px; background: #4a4a4a; display: flex; align-items: center; padding-left: 7px; color: #e6e6e6; }
.thumb { width: 64px; height: 52px; border: 2px solid #666; background: linear-gradient(to bottom, #1056a8, #6ca0ee 85%); margin-right: 21px; }
.layer span { line-height: 1; }
.lay-lock { margin-left: auto; margin-right: 32px; }
.lfoot { height: 46px; background: #323232; margin-bottom: 2px; flex: none; display: flex; align-items: center; gap: 28px; justify-content: flex-end; padding-right: 55px; }
.lfoot .fx { font-family: "Liberation Serif", serif; font-style: italic; color: #808080; font-size: 28px; width: 26px; line-height: 1; text-align: center; }

/* taskbar */
.taskbar { height: 60px; margin-top: 2px; flex: none; display: flex; align-items: center; position: relative; background:
  linear-gradient(112deg, #000 6%, #1d1322 10%, #000 13%, #15181c 16%, #000 20%, #0d0d10 26%, #000 30%, #1c1510 40%, #000 44%, #101418 48%, #0f1a12 53%, #281c10 57%, #000 60%, #0c1220 64%, #14181c 70%, #0d1526 76%, #000 82%, #000 100%); }
.tb-start { width: 78px; height: 60px; display: flex; align-items: center; justify-content: center; padding-right: 6px; flex: none; }
.tb-i { width: 62.100px; height: 60px; display: flex; align-items: center; justify-content: center; flex: none; position: relative; }
.tb-i svg { width: 32px; height: 32px; }
.tb-active { background: linear-gradient(120deg, #3c3a3e, #5e5d64); }
.tb-active::after, .tb-active-pink::after { content: ""; position: absolute; left: 7px; right: 8px; bottom: 0; height: 4px; background: #ff87b9; }
.tb-active::after { left: 0; right: 0; }
.t-gray { font-family: "Liberation Serif", serif; font-weight: 400; font-size: 20px; fill: #444; text-anchor: middle; }
.t-center { font-size: 15px; text-anchor: middle; }
.dev-t { font-size: 11px; fill: #1c2b55; text-anchor: middle; }
.cpp-t { font-size: 12px; fill: #2a74d8; text-anchor: middle; }
.tile-t { font-size: 12px; }
.tbps-t { font-size: 18px; fill: #31a8ff; }
.tblr-t { font-size: 18px; fill: #b4d4e8; font-weight: 400; }
.tray { display: flex; align-items: center; margin-left: 4px; flex: none; }
.ty { width: 47.800px; height: 60px; display: flex; align-items: center; justify-content: center; color: #fff; flex: none; }
.ty-ime { font-size: 32px; line-height: 1; }
.ty-sogou { margin-left: 9px; }
.clock { width: 68px; margin-left: 25px; color: #fff; font-family: "Open Sans", sans-serif; font-size: 25px; letter-spacing: -.5px; line-height: 1; white-space: nowrap; flex: none; }
.notif { margin-left: 34px; display: flex; flex: none; }
.taskbar::after { content: ""; position: absolute; right: 9px; top: 0; width: 1px; height: 60px; background: #888; }
```
